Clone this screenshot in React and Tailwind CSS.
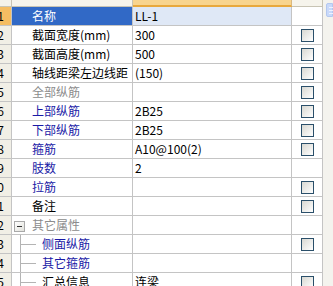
const rows = [
  { name: "名称", value: "LL-1", tone: "selected", check: false },
  { name: "截面宽度(mm)", value: "300", tone: "black", check: true },
  { name: "截面高度(mm)", value: "500", tone: "black", check: true },
  { name: "轴线距梁左边线距", value: "(150)", tone: "black", check: true },
  { name: "全部纵筋", value: "", tone: "gray", check: true },
  { name: "上部纵筋", value: "2B25", tone: "blue", check: true },
  { name: "下部纵筋", value: "2B25", tone: "blue", check: true },
  { name: "箍筋", value: "A10@100(2)", tone: "blue", check: true },
  { name: "肢数", value: "2", tone: "blue", check: false },
  { name: "拉筋", value: "", tone: "blue", check: true },
  { name: "备注", value: "", tone: "black", check: true },
  { name: "其它属性", value: "", tone: "gray", check: false, group: true },
  { name: "侧面纵筋", value: "", tone: "blue", check: true, child: true },
  { name: "其它箍筋", value: "", tone: "blue", check: false, child: true },
  { name: "汇总信息", value: "连梁", tone: "black", check: true, child: true },
];

const toneClass = {
  selected: "text-white",
  black: "text-black",
  gray: "text-[#8c8c8c]",
  blue: "text-[#1a1aa6]",
};

const Checkbox = () => (
  <div className="h-[13px] w-[13px] border border-[#2a4f6a] bg-linear-to-br from-[#d8d8d2] to-white" />
);

const Row = ({ row, index }) => {
  const selected = row.tone === "selected";

  return (
    <div className="flex h-[19px] shrink-0">
      <div
        className={`flex w-[12px] shrink-0 items-center justify-end overflow-hidden border-r border-b border-[#c4c4c4] pr-[7px] text-[12px] text-black ${
          selected ? "bg-[#f5bd62]" : "bg-[#f1efe6]"
        }`}
      >
        <span className="shrink-0">{index + 1}</span>
      </div>

      <div
        className={`relative flex w-[121px] shrink-0 items-center border-r border-b border-[#c4c4c4] text-[12px] ${
          selected ? "bg-[#3169c6]" : "bg-white"
        } ${toneClass[row.tone]} ${row.child ? "pl-[30px]" : "pl-[20px]"}`}
      >
        {row.group ? (
          <div className="absolute left-[2px] top-[5px] flex h-[11px] w-[11px] items-center justify-center border border-[#a9a9a9] bg-linear-to-br from-white to-[#e2e2dc]">
            <div className="h-px w-[5px] bg-[#333]" />
          </div>
        ) : null}
        {row.child ? (
          <>
            <div className="absolute left-[8px] top-0 h-full w-px bg-[#b4b4b4]" />
            <div className="absolute left-[9px] top-[9px] h-px w-[15px] bg-[#b4b4b4]" />
          </>
        ) : null}
        <span className="whitespace-nowrap">{row.name}</span>
      </div>

      <div
        className={`flex w-[159px] shrink-0 items-center overflow-hidden border-r border-b border-[#c4c4c4] pl-[2px] text-[12px] text-black ${
          selected ? "bg-[#dfe8f6]" : "bg-white"
        }`}
      >
        <span className="whitespace-nowrap">{row.value}</span>
      </div>

      <div className="flex w-[31px] shrink-0 items-center justify-center border-r border-b border-[#c4c4c4] bg-white">
        {row.check ? <Checkbox /> : null}
      </div>
    </div>
  );
};

export default function App() {
  return (
    <div
      className="flex h-[286px] w-[333px] overflow-hidden bg-white"
      style={{ fontFamily: '"Noto Sans CJK SC", "Liberation Sans", sans-serif' }}
    >
      <div className="-mt-[12px] flex w-[323px] shrink-0 flex-col">
        <div className="flex h-[19px] shrink-0 text-[12px] text-[#222]">
          <div className="w-[12px] shrink-0 border-r border-b border-[#c8c4b4] bg-[#f4f2ea]" />
          <div className="flex w-[121px] shrink-0 items-end justify-center border-r border-b border-[#c8c4b4] bg-[#f6f4ec] pb-[7px] leading-none">
            属性名称
          </div>
          <div className="flex w-[159px] shrink-0 items-end justify-center border-r border-b-2 border-b-[#e8a83c] border-r-[#d8b880] bg-[#f8d48e] pb-[6px] leading-none">
            属性值
          </div>
          <div className="flex w-[31px] shrink-0 items-end justify-center border-r border-b border-[#c8c4b4] bg-[#f6f4ec] pb-[7px] leading-none">
            附加
          </div>
        </div>
        {rows.map((row, index) => (
          <Row key={index} row={row} index={index} />
        ))}
      </div>

      <div className="w-[10px] shrink-0 bg-[#f4f3ee] pt-[3px] pl-[3px]">
        <div className="flex h-[14px] flex-col justify-center gap-[2px] rounded-l-[2px] border border-[#b4c8ef] bg-[#c9d9fa] pl-[2px]">
          <div className="h-px w-[5px] bg-[#eef3ff]" />
          <div className="h-px w-[5px] bg-[#eef3ff]" />
          <div className="h-px w-[5px] bg-[#eef3ff]" />
        </div>
      </div>
    </div>
  );
}
